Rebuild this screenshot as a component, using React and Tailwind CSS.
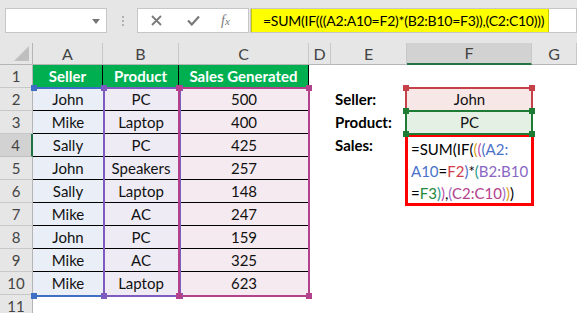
import React from "react";

const font = { fontFamily: "Lato, 'Noto Sans', sans-serif" };

const data = [
    ["John", "PC", "500"],
    ["Mike", "Laptop", "400"],
    ["Sally", "PC", "425"],
    ["John", "Speakers", "257"],
    ["Sally", "Laptop", "148"],
    ["Mike", "AC", "247"],
    ["John", "PC", "159"],
    ["Mike", "AC", "325"],
    ["Mike", "Laptop", "623"],
];

const cols = ["A", "B", "C", "D", "E", "F", "G"];

const RowHead = ({ n, active }) => (
    <div
        className={
            "flex items-center justify-center border-b border-r text-[15px] text-[#444] " +
            (active
                ? "bg-[#d2d2d2] border-b-[#c0c0c0] border-r-2 border-r-[#217346]"
                : "bg-[#e6e6e6] border-b-[#c8c8c8] border-r-[#b5b5b5]")
        }
    >
        {n}
    </div>
);

const Marker = ({ className }) => <div className={"absolute h-[6px] w-[6px] " + className} />;

// a coloured range box like Excel shows while editing a formula
const RangeBox = ({ className, color, noLeft }) => (
    <div className={"pointer-events-none absolute " + className}>
        <div className={"absolute inset-0 border-2 " + (noLeft ? "border-l-0 " : "") + color.border} />
        <Marker className={"-left-[2px] -top-[2px] " + color.bg} />
        <Marker className={"-right-[2px] -top-[2px] " + color.bg} />
        <Marker className={"-left-[2px] -bottom-[2px] " + color.bg} />
        <Marker className={"-right-[2px] -bottom-[2px] " + color.bg} />
    </div>
);

const P = ({ c, children }) => <span className={c}>{children}</span>;

const cell = "flex items-center justify-center text-[15px] text-[#111]";

export default function App() {
    return (
        <div className="h-[313px] w-[577px] overflow-hidden bg-white" style={font}>
            {/* formula bar */}
            <div className="flex h-[43px] items-start bg-[#e6e6e6] pt-[8px]">
                <div className="relative ml-[5px] h-[25px] w-[102px] border border-[#c6c6c6] bg-white">
                    <div className="absolute right-[6px] top-[10px] h-0 w-0 border-x-[4px] border-t-[5px] border-x-transparent border-t-[#777]" />
                </div>
                <div className="ml-[15px] flex h-[25px] w-[2px] flex-col items-center justify-center gap-[2px]">
                    <div className="h-[2px] w-[2px] bg-[#b0b0b0]" />
                    <div className="h-[2px] w-[2px] bg-[#b0b0b0]" />
                    <div className="h-[2px] w-[2px] bg-[#b0b0b0]" />
                </div>
                <div className="ml-[13px] flex h-[25px] w-[112px] items-center border border-[#c6c6c6] bg-white text-[#777]">
                    <svg className="ml-[13px]" width="11" height="11" viewBox="0 0 11 11">
                        <path d="M1 1L10 10M10 1L1 10" stroke="#7a7a7a" strokeWidth="1.8" />
                    </svg>
                    <svg className="ml-[25px]" width="13" height="11" viewBox="0 0 13 11">
                        <path d="M1 5.5L4.8 9.5L12 1.5" stroke="#7a7a7a" strokeWidth="2.2" fill="none" />
                    </svg>
                    <span className="ml-[21px] font-['Liberation_Serif'] text-[14px] italic text-[#7a7a7a]">
                        f<span className="text-[11px]">x</span>
                    </span>
                </div>
                <div className="ml-[1px] flex h-[25px] flex-1 items-center overflow-hidden border border-[#c6c6c6] bg-white">
                    <div className="flex h-[25px] w-[298px] shrink-0 items-center whitespace-nowrap border border-[#c8c800] bg-[#ffff00] pl-[11px] text-[14px] tracking-[-0.25px] text-black">
                        =SUM(IF(((A2:A10=F2)*(B2:B10=F3)),(C2:C10)))
                    </div>
                </div>
            </div>

            {/* sheet */}
            <div className="relative grid grid-cols-[33px_70px_76px_130px_22px_76px_125px_45px] grid-rows-[22px_repeat(11,23px)]">
                {/* column headers */}
                <div className="relative border-b border-r border-[#b5b5b5] bg-[#e6e6e6]">
                    <div className="absolute bottom-[3px] right-[3px] h-0 w-0 border-b-[15px] border-l-[15px] border-b-[#bfbfbf] border-l-transparent" />
                </div>
                {cols.map((c) => (
                    <div
                        key={c}
                        className={
                            "flex items-center justify-center border-r border-r-[#c8c8c8] text-[16px] text-[#444] " +
                            (c === "F"
                                ? "border-b-2 border-b-[#217346] bg-[#d2d2d2]"
                                : "border-b border-b-[#b5b5b5] bg-[#e6e6e6]")
                        }
                    >
                        {c}
                    </div>
                ))}

                {/* row 1 */}
                <RowHead n={1} />
                <div className="flex items-center justify-center border-r border-black bg-[#00b050] text-[15px] font-bold text-white">Seller</div>
                <div className="flex items-center justify-center border-r border-black bg-[#00b050] text-[15px] font-bold text-white">Product</div>
                <div className="flex items-center justify-center border-r border-black bg-[#00b050] text-[15px] font-bold text-white">Sales Generated</div>
                <div />
                <div />
                <div />
                <div />

                {data.map((r, i) => {
                    const n = i + 2;
                    const line = i < data.length - 1 ? "border-b border-black " : "";
                    return (
                        <React.Fragment key={n}>
                            <RowHead n={n} active={n === 4} />
                            <div className={line + "bg-[#e9eef7] " + cell}>{r[0]}</div>
                            <div className={line + "bg-[#eeebf5] " + cell}>{r[1]}</div>
                            <div className={line + "bg-[#f5eaf0] " + cell}>{r[2]}</div>
                            <div />
                            {n === 2 && <div className="flex items-center pl-[4px] text-[15px] font-bold text-black">Seller:</div>}
                            {n === 3 && <div className="flex items-center pl-[4px] text-[15px] font-bold text-black">Product:</div>}
                            {n === 4 && <div className="flex items-center pl-[4px] text-[15px] font-bold text-black">Sales:</div>}
                            {n > 4 && <div />}
                            {n === 2 && <div className={"bg-[#f8e7e7] " + cell}>John</div>}
                            {n === 3 && <div className={"bg-[#e4f0e3] " + cell}>PC</div>}
                            {n === 4 && (
                                <div className="row-span-3 -mx-[2px] -mb-[3px] whitespace-nowrap border-[3px] border-[#ff0000] pl-[3px] pt-[1px] text-[15px] leading-[22px] text-black">
                                    <div>
                                        =SUM(IF(<P c="text-[#d9a21b]">(</P>
                                        <P c="text-[#c04fa8]">(</P>
                                        <P c="text-[#4a72c9]">(A2:</P>
                                    </div>
                                    <div>
                                        <P c="text-[#4a72c9]">A10</P>=<P c="text-[#d0404a]">F2</P>
                                        <P c="text-[#4a72c9]">)</P>*<P c="text-[#2a9a8a]">(</P>
                                        <P c="text-[#8a66c4]">B2:B10</P>
                                    </div>
                                    <div>
                                        =<P c="text-[#1e8a3a]">F3</P>
                                        <P c="text-[#2a9a8a]">)</P>
                                        <P c="text-[#c04fa8]">)</P>
                                        ,<P c="text-[#a070c8]">(</P>
                                        <P c="text-[#b4418c]">C2:C10</P>
                                        <P c="text-[#a070c8]">)</P>
                                        <P c="text-[#d9a21b]">)</P>)
                                    </div>
                                </div>
                            )}
                            {n > 6 && <div />}
                            <div />
                        </React.Fragment>
                    );
                })}

                {/* row 11 */}
                <RowHead n={11} />
                <div />
                <div />
                <div />
                <div />
                <div />
                <div />
                <div />

                {/* formula range highlights */}
                <RangeBox className="left-[33px] top-[44px] h-[210px] w-[72px]" color={{ border: "border-[#3f6fc4]", bg: "bg-[#3f6fc4]" }} noLeft />
                <RangeBox className="left-[103px] top-[44px] h-[210px] w-[78px]" color={{ border: "border-[#7e5cbf]", bg: "bg-[#7e5cbf]" }} />
                <RangeBox className="left-[178px] top-[44px] h-[210px] w-[132px]" color={{ border: "border-[#b4418c]", bg: "bg-[#b4418c]" }} />
                <RangeBox className="left-[405px] top-[44px] h-[25px] w-[128px]" color={{ border: "border-[#c6404a]", bg: "bg-[#c6404a]" }} />
                <RangeBox className="left-[405px] top-[67px] h-[25px] w-[128px]" color={{ border: "border-[#1e7b34]", bg: "bg-[#1e7b34]" }} />
            </div>
        </div>
    );
}
